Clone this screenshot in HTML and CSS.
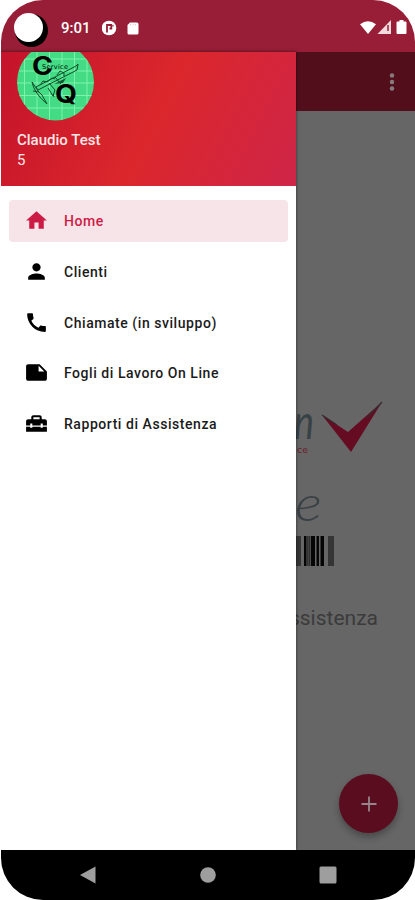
FILE: index.html
```
<!DOCTYPE html>
<html lang="it">
    <head>
        <meta charset="utf-8">
        <title>Service</title>
        <link rel="stylesheet" href="styles.css">
    </head>
    <body>
        <div class="phone">
            <header class="statusbar">
                <span class="camera"></span>
                <span class="clock">9:01</span>
                <svg class="status-left" width="42" height="16" viewBox="0 0 42 16">
                    <circle cx="7" cy="8" r="7.3" fill="#fff"/>
                    <path d="M5 12.500V5h4.300v3.500H7.500" fill="none" stroke="#981d36" stroke-width="1.800"/>
                    <path d="M11 5v1.500" stroke="#981d36" stroke-width="1.200"/>
                    <path d="M28 2.500h7q1.500 0 1.500 1.500v9q0 1.500-1.500 1.500h-8q-1.500 0-1.500-1.500V5z" fill="#fff"/>
                    <path d="M28.500 4v1.500M31 4v1.500M33.500 4v1.500" stroke="#e2bcc4" stroke-width=".8"/>
                </svg>
                <svg class="status-right" width="49" height="16" viewBox="0 0 49 16">
                    <path d="M0 4.200Q8 -1.800 16 4.200L8 14z" fill="#fff"/>
                    <path d="M17.500 14L31 0v14z" fill="#f2d9de"/>
                    <path d="M28 5v6" stroke="#981d36" stroke-width="1.500"/>
                    <path d="M39.500 0h4v1.500h2q1 0 1 1V13q0 1-1 1h-8q-1 0-1-1V2.500q0-1 1-1h2z" fill="#fff"/>
                </svg>
            </header>

            <div class="app">
                <nav class="drawer">
                    <div class="profile">
                        <svg class="avatar" width="78" height="69" viewBox="0 0 78 69">
                            <defs>
                                <clipPath id="round"><circle cx="39.500" cy="30" r="38.500"/></clipPath>
                            </defs>
                            <g clip-path="url(#round)">
                                <rect width="78" height="69" fill="#43dc85"/>
                                <path d="M8.500 0v69M21 0v69M33.500 0v69M46 0v69M58.500 0v69M71 0v69M0 7h78M0 19h78M0 31h78M0 43.500h78M0 56h78" stroke="#85f3ae" stroke-width=".9"/>
                                <text class="avatar-c" x="16" y="23" textLength="21" lengthAdjust="spacingAndGlyphs">C</text>
                                <text class="avatar-q" x="39" y="51" textLength="22" lengthAdjust="spacingAndGlyphs">Q</text>
                                <text class="avatar-word" x="26" y="17" textLength="26">Service</text>
                                <g fill="none" stroke="#124b2b" stroke-width="1">
                                    <path d="M20 35L60 14l2-2-1 6-39 20z"/>
                                    <path d="M16 30q2 11 15 22M16 30l6 9 4 4 5 9M17 39l6 1M33 31l6 7-2 6-5-8M37 42l1 3M39 25l6 7"/>
                                    <path d="M24 33l3-4 4 1 5-4 3 1M41 23l3-4 4 2v3"/>
                                </g>
                                <path d="M38 32l12-6-3 5z" fill="#155c35"/>
                            </g>
                        </svg>
                        <div class="profile-name">Claudio Test</div>
                        <div class="profile-id">5</div>
                    </div>
                    <ul class="menu">
                        <li class="item active">
                            <svg class="icon" viewBox="0 0 24 24"><path d="M10 20v-6h4v6h5v-8h3L12 3 2 12h3v8z"/></svg>
                            <span>Home</span>
                        </li>
                        <li class="item">
                            <svg class="icon" viewBox="0 0 24 24"><path d="M12 12c2.210 0 4-1.790 4-4s-1.790-4-4-4-4 1.790-4 4 1.790 4 4 4zm0 2c-2.670 0-8 1.340-8 4v2h16v-2c0-2.660-5.330-4-8-4z"/></svg>
                            <span>Clienti</span>
                        </li>
                        <li class="item">
                            <svg class="icon" viewBox="0 0 24 24"><path d="M20.010 15.380c-1.230 0-2.420-.2-3.530-.560-.350-.120-.740-.030-1.010.240l-1.570 1.970c-2.830-1.350-5.480-3.900-6.890-6.830l1.950-1.660c.270-.280.350-.670.240-1.020-.370-1.110-.560-2.300-.560-3.530 0-.540-.450-.990-.990-.990H4.190C3.650 3 3 3.240 3 3.990 3 13.280 10.730 21 20.010 21c.710 0 .990-.630.990-1.180v-3.450c0-.540-.450-.990-.990-.990z"/></svg>
                            <span>Chiamate (in sviluppo)</span>
                        </li>
                        <li class="item">
                            <svg class="icon" viewBox="0 0 24 24"><path d="M15 4H4c-1.100 0-2 .9-2 2v12.010c0 1.100.9 1.990 2 1.990h16c1.100 0 2-.9 2-2v-7zm-1 7V5.500l5.500 5.500z"/></svg>
                            <span>Fogli di Lavoro On Line</span>
                        </li>
                        <li class="item">
                            <svg class="icon" viewBox="0 0 24 24"><path d="M18 16h-2v-1H8v1H6v-1H2v5h20v-5h-4zM20 8h-3V6c0-1.100-.9-2-2-2H9c-1.100 0-2 .9-2 2v2H4c-1.100 0-2 .9-2 2v4h4v-2h2v2h8v-2h2v2h4v-4c0-1.100-.9-2-2-2zm-5 0H9V6h6z"/></svg>
                            <span>Rapporti di Assistenza</span>
                        </li>
                    </ul>
                </nav>

                <main class="page">
                    <div class="toolbar">
                        <svg width="6" height="20" viewBox="0 0 6 20" fill="#857b7d">
                            <circle cx="3" cy="3.500" r="2.200"/>
                            <circle cx="3" cy="10" r="2.200"/>
                            <circle cx="3" cy="16.500" r="2.200"/>
                        </svg>
                    </div>
                    <svg class="brand" width="119" height="180" viewBox="0 0 119 180">
                        <text class="brand-n" x="-2" y="49" textLength="20" lengthAdjust="spacingAndGlyphs">n</text>
                        <path d="M26 25L52 42 86 12 55 62z" fill="#650b22"/>
                        <path d="M26 25l15 10M86 12L71 28" stroke="#352b30" stroke-width="1.200"/>
                        <text class="brand-ce" x="1" y="63">ce</text>
                        <text class="brand-e" x="-1" y="131" textLength="27" lengthAdjust="spacingAndGlyphs">e</text>
                        <!-- barcode -->
                        <path d="M0 146h5v30H0zM32 146h6v30h-6z" fill="#353535"/>
                        <path d="M8 146h2.500v30H8zM15 146h4v30h-4zM20.500 146h2.500v30h-2.500zM24.500 146h3.500v30h-3.500z" fill="#060606"/>
                        <path d="M11.300 146h1.200v30h-1.200zM13.200 146h1.100v30h-1.100z" fill="#202020"/>
                    </svg>
                    <div class="caption">ssistenza</div>
                    <div class="fab">
                        <svg width="16" height="16" viewBox="0 0 16 16"><path d="M8 .5v15M.5 8h15" stroke="#94868a" stroke-width="1.800"/></svg>
                    </div>
                </main>
            </div>

            <footer class="navbar">
                <svg width="18" height="18" viewBox="0 0 18 18"><path d="M1 9L16.500.5v17z" fill="#9e9e9e"/></svg>
                <svg width="18" height="18" viewBox="0 0 18 18"><circle cx="9" cy="9" r="7.800" fill="#9e9e9e"/></svg>
                <svg width="18" height="18" viewBox="0 0 18 18"><rect x=".5" y=".5" width="17" height="17" rx="1.500" fill="#9e9e9e"/></svg>
            </footer>
        </div>
    </body>
</html>
```
FILE: styles.css
```
body{
    margin: 0;
    background-color: #fff;
    font-family: Roboto, "Liberation Sans", sans-serif;
}
.phone{
    display: flex;
    flex-direction: column;
    width: 414px;
    height: 900px;
    margin-left: 1px;
    border-radius: 42px;
    overflow: hidden;
}
.statusbar{
    display: flex;
    align-items: center;
    height: 52px;
    flex: none;
    box-sizing: border-box;
    padding: 3px 6px 0 13px;
    background-color: #981d36;
    color: #fff;
}
.camera{
    width: 29px;
    height: 29px;
    border-radius: 50%;
    background-color: #fff;
    box-shadow: 3px 3px 0 2px #000;
}
.clock{
    margin-left: 18px;
    width: 41px;
    font-size: 15px;
    font-weight: 500;
}
.status-right{
    margin-left: auto;
}
.app{
    display: flex;
    height: 798px;
    flex: none;
    margin-left: -1px;
}
.drawer{
    width: 296px;
    flex: none;
    background-color: #fff;
    z-index: 1;
    box-shadow: 0 0 3px rgba(0,0,0,0.6);
}
.profile{
    height: 134px;
    box-sizing: border-box;
    padding-left: 17px;
    background: linear-gradient(117deg, #c4132b 0%, #db272c 52%, #cf2548 100%);
    color: #fbe6e8;
}
.avatar{
    display: block;
    margin-left: -1px;
}
.avatar-c,.avatar-q{
    font-family: Inter, sans-serif;
    font-size: 25px;
    font-weight: bold;
}
.avatar-q{
    font-size: 25px;
}
.avatar-word{
    font-family: "DejaVu Sans", sans-serif;
    font-size: 6.500px;
}
.profile-name{
    margin-top: 9px;
    font-size: 15px;
    font-weight: 500;
    line-height: 20px;
}
.profile-id{
    font-size: 15px;
    line-height: 21px;
}
.menu{
    display: flex;
    flex-direction: column;
    gap: 8.800px;
    margin: 0;
    padding: 13.500px 8px 0 9px;
    list-style: none;
}
.item{
    display: flex;
    align-items: center;
    gap: 15px;
    height: 42px;
    padding-left: 15px;
    border-radius: 4px;
    font-size: 14px;
    font-weight: 500;
    letter-spacing: 0.550px;
    color: #1b1b1b;
}
.item span{
    padding-top: 1px;
}
.icon{
    width: 25px;
    height: 25px;
    fill: #000;
}
.active{
    background-color: #f7e4e8;
    color: #cc1c46;
}
.active .icon{
    fill: #cc1c46;
}
.page{
    display: flex;
    flex-direction: column;
    width: 119px;
    overflow: hidden;
    background-color: #666;
}
.toolbar{
    display: flex;
    align-items: center;
    justify-content: flex-end;
    height: 59px;
    flex: none;
    padding-right: 20px;
    background-color: #530e1c;
}
.brand{
    margin-top: 279px;
}
.brand-n{
    font-family: Lato, sans-serif;
    font-size: 49px;
    font-style: italic;
    font-weight: 400;
    fill: #374247;
}
.brand-ce{
    font-family: "DejaVu Sans", sans-serif;
    font-size: 9.500px;
    fill: #701b2d;
}
.brand-e{
    font-family: Lato, sans-serif;
    font-size: 49px;
    font-style: italic;
    font-weight: 300;
    fill: #3a4144;
}
.caption{
    align-self: flex-end;
    margin-top: 35px;
    margin-right: 37px;
    font-size: 21px;
    line-height: 26px;
    color: #3b3b3b;
}
.fab{
    display: flex;
    align-items: center;
    justify-content: center;
    align-self: flex-end;
    width: 59px;
    height: 59px;
    flex: none;
    margin: auto 17px 17px 0;
    border-radius: 50%;
    background-color: #590d1e;
    box-shadow: 0 4px 7px rgba(0,0,0,0.3);
}
.navbar{
    display: flex;
    align-items: center;
    justify-content: center;
    gap: 102px;
    height: 50px;
    background-color: #000;
}
```
